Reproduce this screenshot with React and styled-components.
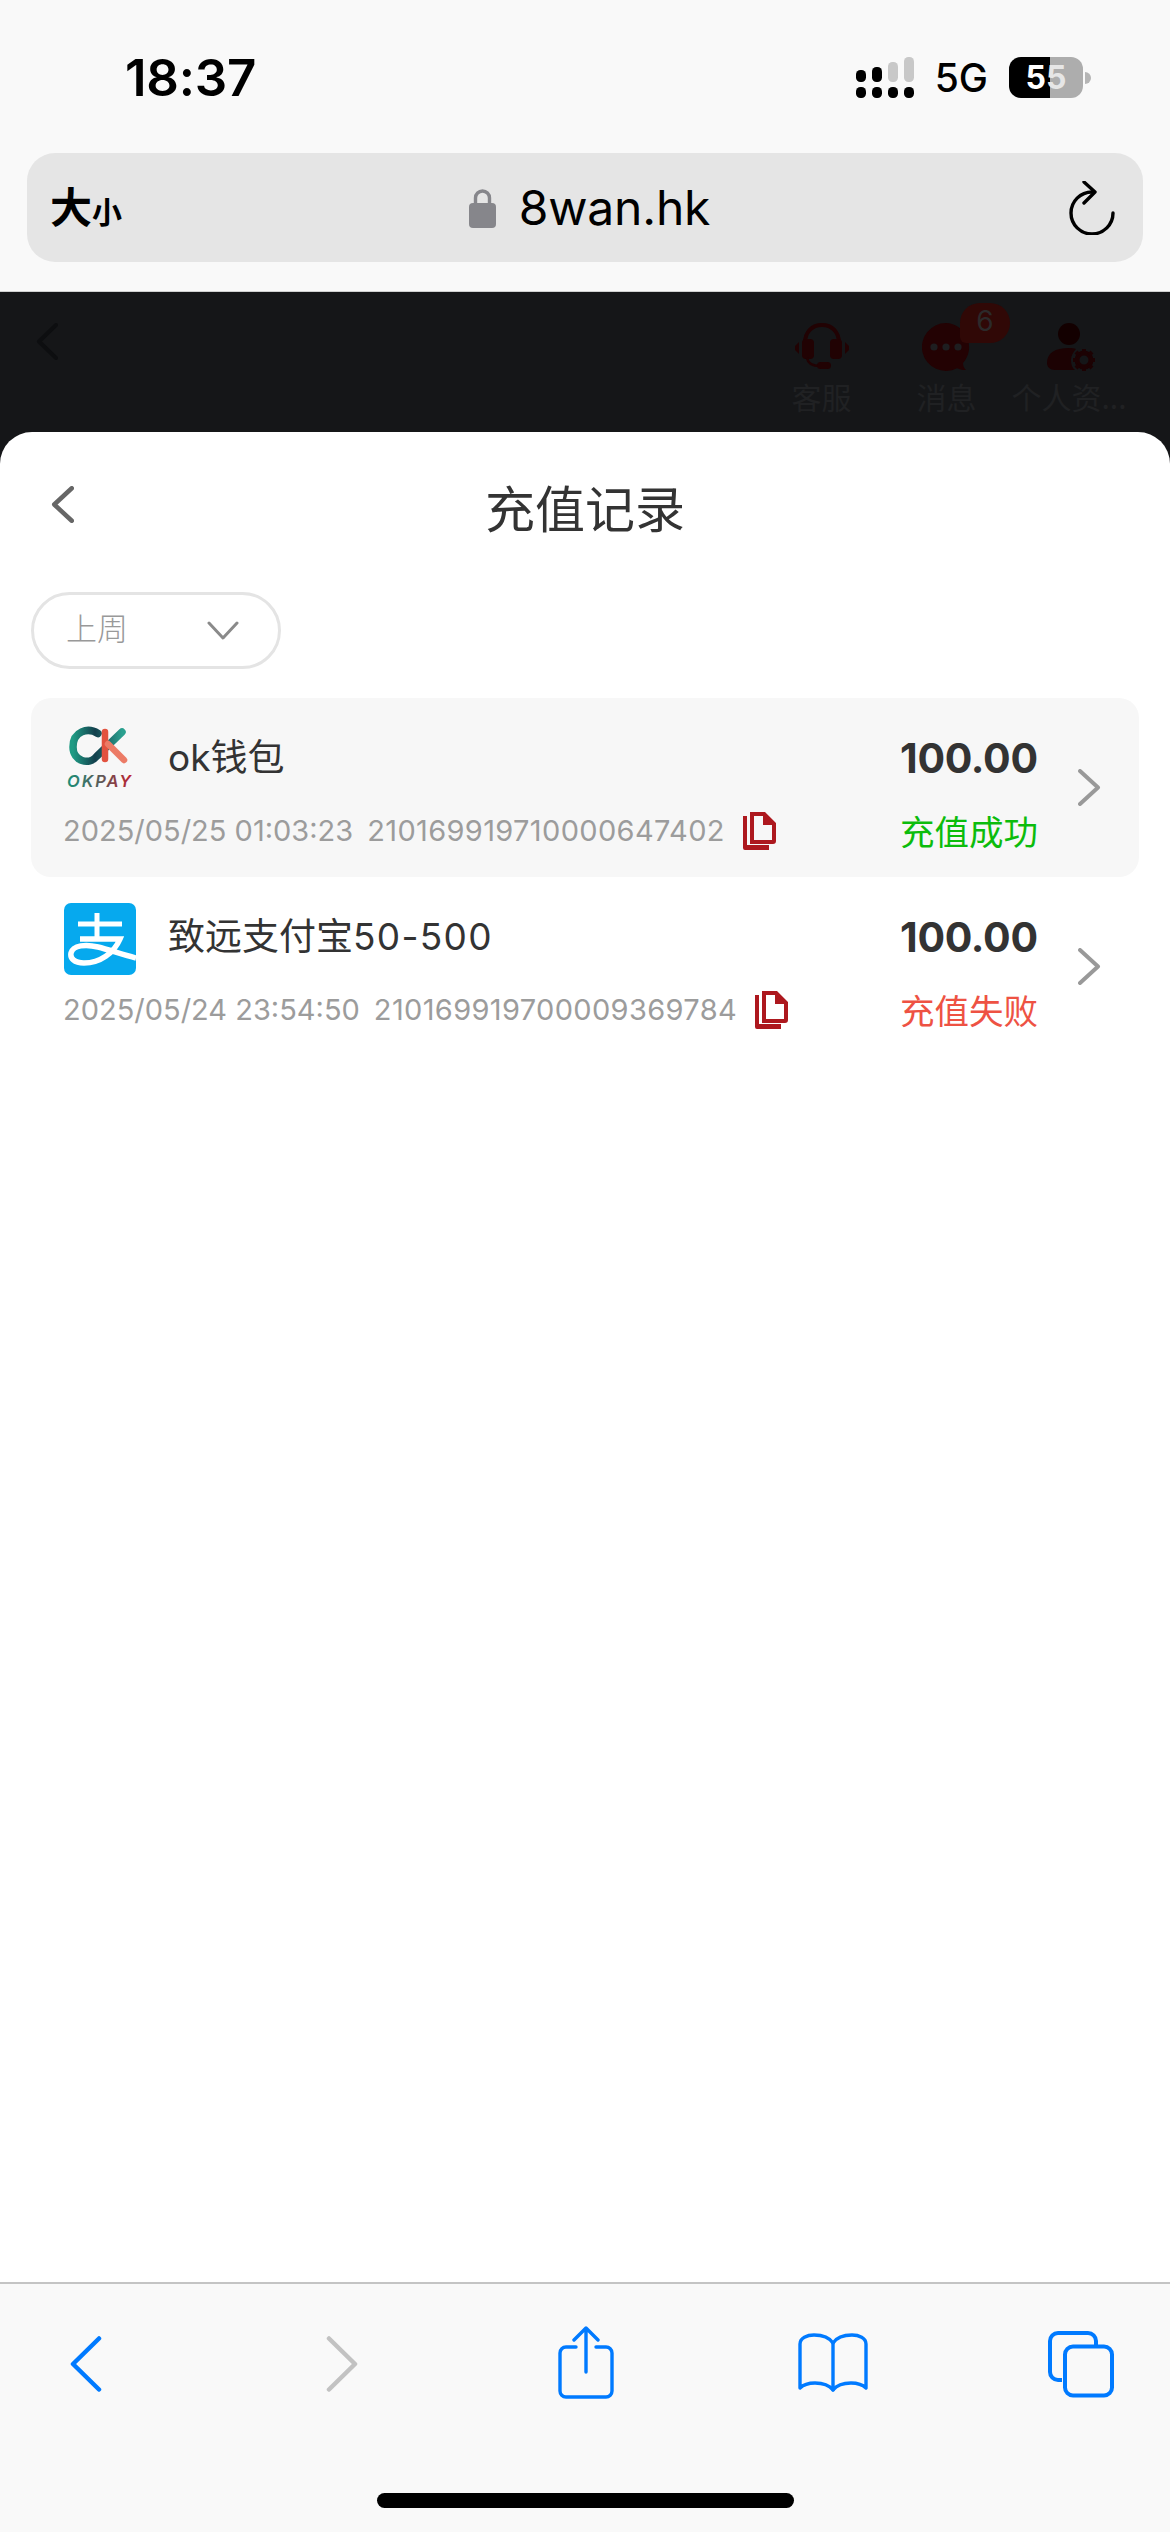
import React from "react";
import styled, { createGlobalStyle } from "styled-components";

const Global = createGlobalStyle`
  html, body { margin: 0; padding: 0; background: #fff; }
  body { font-family: Inter, "Noto Sans CJK SC", sans-serif; }
  * { box-sizing: border-box; }
`;

const Page = styled.div`
  width: 1170px; height: 2532px; display: flex; flex-direction: column; overflow: hidden;
`;
const Chrome = styled.header`
  height: 292px; flex: none; background: #f9f9f9; display: flex; flex-direction: column;
  border-bottom: 1px solid #d0d0d0;
`;
const StatusBar = styled.div`
  height: 153px; flex: none; display: flex; align-items: flex-start; justify-content: space-between;
  padding: 50px 79px 0 125px;
`;
const Time = styled.div`
  font: 600 51px/56px Inter, sans-serif; color: #000; letter-spacing: -0.2px;
`;
const StatusRight = styled.div`
  display: flex; align-items: center; gap: 21px; height: 41px; margin-top: 7px;
`;
const NetLabel = styled.span`
  font: 500 39px/41px Inter, sans-serif; color: #000;
`;
const Battery = styled.div`
  width: 74px; height: 41px; border-radius: 12px; overflow: hidden;
  background: linear-gradient(90deg, #000 0 55%, #adadad 55% 100%);
  color: #fff; font: 700 32px/41px Inter, sans-serif;
  display: flex; justify-content: center;
`;
const BatteryTip = styled.div`
  width: 6px; height: 12px; background: #b5b5b5; border-radius: 0 6px 6px 0; margin-left: -19px;
`;
const FiveLight = styled.span`color: #e6e6e6;`;

const UrlBar = styled.div`
  margin: 0 27px; height: 109px; background: #e5e5e5; border-radius: 28px;
  display: flex; align-items: center; justify-content: space-between; padding: 0 28px 0 23px;
`;
const AaLabel = styled.div`
  display: flex; align-items: baseline; color: #000; font-family: "Noto Sans CJK SC", sans-serif; font-weight: 600;
`;
const AaBig = styled.span`font-size: 42px; line-height: 50px;`;
const AaSmall = styled.span`font-size: 30px; line-height: 50px;`;
const Domain = styled.div`
  display: flex; align-items: center; gap: 23px; margin-left: -12px;
  font: 400 48px/60px Inter, sans-serif; color: #000; letter-spacing: -0.2px;
`;

const Dim = styled.div`
  flex: 1; min-height: 0; background: #151618; display: flex; flex-direction: column;
`;
const DimHeader = styled.div`
  height: 140px; flex: none; display: flex; justify-content: space-between; padding: 31px 41px 0 36px;
`;
const DimActions = styled.div`
  display: flex; align-items: flex-start;
`;
const DimAction = styled.div`
  width: ${p => p.$w}px; display: flex; flex-direction: column; align-items: center; position: relative;
  font: 400 30px/34px "Noto Sans CJK SC", sans-serif; color: #202123; white-space: nowrap; gap: 8px;
`;
const Badge = styled.span`
  position: absolute; left: 76px; top: -20px; width: 50px; height: 40px; border-radius: 20px 20px 20px 6px;
  background: #300806; color: #2c2a2a; font: 400 28px/36px Inter, sans-serif; text-align: center;
`;

const Sheet = styled.section`
  flex: 1; min-height: 0; background: #fff; border-radius: 32px 32px 0 0; display: flex; flex-direction: column;
`;
const SheetTitleBar = styled.div`
  height: 160px; flex: none; display: flex; align-items: center; justify-content: center; position: relative;
  padding-bottom: 13px;
`;
const BackBtn = styled.div`
  position: absolute; left: 51px; top: 54px; display: flex;
`;
const Title = styled.h1`
  margin: 0; font: 400 50px/60px "Noto Sans CJK SC", sans-serif; color: #333;
`;
const Filter = styled.div`
  margin-left: 31px; width: 250px; height: 77px; border: 3px solid #e4e4e4; border-radius: 39px; flex: none;
  display: flex; align-items: center; justify-content: space-between; padding: 0 39px 0 32px;
  font: 300 31px/36px "Noto Sans CJK SC", sans-serif; color: #999;
`;
const FilterLabel = styled.span`margin-top: -8px;`;
const List = styled.div`
  margin: 29px 31px 0; display: flex; flex-direction: column;
`;
const Row = styled.div`
  height: 179px; border-radius: 20px; background: ${p => (p.$active ? "#f7f7f7" : "transparent")};
  display: flex; align-items: stretch; padding: 0 38px 0 33px;
`;
const RowMain = styled.div`
  flex: 1; min-width: 0; display: flex; flex-direction: column; padding-top: 26px;
`;
const RowTop = styled.div`
  display: flex; align-items: center; gap: 32px; height: 72px;
`;
const Logo = styled.div`
  width: 72px; height: 72px; flex: none; display: flex;
`;
const Name = styled.div`
  font: 400 37px/44px Inter, "Noto Sans CJK SC", sans-serif; color: #333;
  margin-top: -4px;
`;
const NameSuffix = styled.span`letter-spacing: 1.3px;`;
const Meta = styled.div`
  display: flex; align-items: center; margin: 15px 0 0 -1px; height: 40px;
  font: 400 29px/40px Inter, sans-serif; color: #9c9c9c; white-space: nowrap;
`;
const MetaId = styled.span`margin-left: 14px; letter-spacing: 0.35px;`;
const CopyIcon = styled.svg`margin-left: 18px; flex: none;`;
const RowSide = styled.div`
  flex: none; width: 136px; display: flex; flex-direction: column; padding-top: 37px; margin-right: 42px;
`;
const Amount = styled.div`
  font: 700 41px/46px Inter, sans-serif; color: #333; letter-spacing: -0.3px; white-space: nowrap; text-align: right;
`;
const Status = styled.div`
  margin-top: 29px; font: 400 34.5px/40px "Noto Sans CJK SC", sans-serif; color: ${p => p.$color}; white-space: nowrap;
`;
const RowChevron = styled.div`
  flex: none; align-self: center; display: flex;
`;
const Spacer = styled.div`flex: 1;`;
const Toolbar = styled.footer`
  height: 250px; flex: none; background: #f9f9f9; border-top: 2px solid #c4c4c4; position: relative;
  display: flex; align-items: flex-start; padding: 42px 0 0 0;
`;
const ToolIcon = styled.svg`
  flex: none; margin-top: ${p => p.$top || 0}px; margin-left: ${p => p.$gap}px;
`;
const HomeBar = styled.div`
  position: absolute; left: 377px; bottom: 24px; width: 417px; height: 15px; border-radius: 8px; background: #000;
`;

function Signal() {
  const cols = [0, 16, 32, 48];
  const upper = [
    { y: 13, h: 12, c: "#000" },
    { y: 10, h: 15, c: "#000" },
    { y: 5, h: 20, c: "#c8c8c8" },
    { y: 0, h: 25, c: "#c8c8c8" },
  ];
  return (
    <svg width="58" height="41" viewBox="0 0 58 41">
      {cols.map((x, i) => (
        <g key={x}>
          <rect x={x} y="30" width="10" height="11" rx="4.5" fill="#000" />
          <rect x={x} y={upper[i].y} width="10" height={upper[i].h} rx="4.5" fill={upper[i].c} />
        </g>
      ))}
    </svg>
  );
}
function Lock() {
  return (
    <svg width="27" height="40" viewBox="0 0 27 40">
      <path d="M6.500 18V10a7 7 0 0 1 14 0v8" fill="none" stroke="#86868b" strokeWidth="3.4" />
      <rect x="0" y="15" width="27" height="25" rx="4" fill="#86868b" />
    </svg>
  );
}
function Reload() {
  return (
    <svg width="46" height="54" viewBox="0 0 46 54" fill="none" stroke="#000" strokeWidth="3.4" strokeLinecap="round" strokeLinejoin="round">
      <path d="M23 11a21 21 0 1 0 21 21" />
      <path d="M15 1l11 10-11 11" />
    </svg>
  );
}
function Chevron({ w, h, color, sw, dir = "left" }) {
  const pts = dir === "left" ? `${w - sw / 2},${sw / 2} ${sw / 2 + 1},${h / 2} ${w - sw / 2},${h - sw / 2}`
    : `${sw / 2},${sw / 2} ${w - sw / 2 - 1},${h / 2} ${sw / 2},${h - sw / 2}`;
  return (
    <svg width={w} height={h} viewBox={`0 0 ${w} ${h}`} fill="none" stroke={color} strokeWidth={sw} strokeLinecap="round" strokeLinejoin="round">
      <polyline points={pts} />
    </svg>
  );
}
function Headset() {
  return (
    <svg width="54" height="48" viewBox="0 0 54 48" fill="#210203">
      <path d="M10 20C10 9 17 2 27 2s17 7 17 18" fill="none" stroke="#210203" strokeWidth="4" />
      <rect x="7" y="16" width="12" height="20" rx="4" />
      <rect x="35" y="16" width="12" height="20" rx="4" />
      <path d="M4 19v12L0 27v-4zM50 19v12l4-4v-4z" />
      <path d="M12 35c1 6 6 8 13 8" fill="none" stroke="#210203" strokeWidth="2.5" />
      <rect x="22" y="39" width="14" height="7" rx="3.5" />
    </svg>
  );
}
function Bubble() {
  return (
    <svg width="50" height="48" viewBox="0 0 50 48">
      <path d="M24 0a24 24 0 1 0 11 45.300c3 1.400 6 1.700 9 1.700-2-2-3-4-3-7A24 24 0 0 0 24 0z" fill="#230203" />
      <circle cx="12" cy="24" r="3.6" fill="#1e1e20" />
      <circle cx="24" cy="24" r="3.6" fill="#1e1e20" />
      <circle cx="36" cy="24" r="3.6" fill="#1e1e20" />
    </svg>
  );
}
function PersonGear() {
  return (
    <svg width="50" height="48" viewBox="0 0 50 48" style={{ marginLeft: 6 }}>
      <circle cx="22" cy="11" r="11" fill="#130000" />
      <path d="M0 40c0-10 8-15 22-15 3 0 5 .2 7 1-3 3-5 7-5 11 0 4 1 8 4 10H8c-5 0-8-3-8-7z" fill="#1c0203" />
      <circle cx="37" cy="37" r="7" fill="none" stroke="#1c0203" strokeWidth="5" />
      <g stroke="#1c0203" strokeWidth="4">
        <path d="M37 26v4M37 44v4M26 37h4M44 37h4M29 29l3 3M42 42l3 3M45 29l-3 3M32 42l-3 3" />
      </g>
    </svg>
  );
}
function OkLogo() {
  return (
    <svg width="72" height="72" viewBox="0 0 72 72">
      <defs>
        <linearGradient id="okc" x1="0" y1="0" x2="1" y2="0">
          <stop offset="0" stopColor="#1f9b84" />
          <stop offset="0.45" stopColor="#123f4c" />
          <stop offset="1" stopColor="#2aa08f" />
        </linearGradient>
        <linearGradient id="oky" x1="0" y1="0" x2="1" y2="0">
          <stop offset="0" stopColor="#1a9077" />
          <stop offset="0.5" stopColor="#5a5a58" />
          <stop offset="1" stopColor="#c2202f" />
        </linearGradient>
      </defs>
      <path d="M34 9.500C24 3 9 7 9 23c0 14 16 19 24 9L58 8" fill="none" stroke="url(#okc)" strokeWidth="7.500" strokeLinecap="round" />
      <path d="M41 8v27" fill="none" stroke="#e2523f" strokeWidth="6.500" strokeLinecap="round" />
      <path d="M44 20l16 16" fill="none" stroke="#ec7b66" strokeWidth="6.500" strokeLinecap="round" />
      <text x="3" y="63" fontFamily="Inter, sans-serif" fontStyle="italic" fontWeight="600" fontSize="16.500" letterSpacing="2" fill="url(#oky)">OKPAY</text>
    </svg>
  );
}
function AlipayLogo() {
  return (
    <svg width="72" height="72" viewBox="0 0 72 72">
      <rect width="72" height="72" rx="7" fill="#06a9ee" />
      <g fill="none" stroke="#fff" strokeLinecap="butt">
        <path d="M14 21h44" strokeWidth="5" />
        <path d="M33 10v26" strokeWidth="5" />
        <path d="M16 36h40c-6 14-20 24-36 24-10 0-14-5-13-10 2-8 15-9 27-6 12 3 25 8 38 11" strokeWidth="5.500" />
      </g>
    </svg>
  );
}
function Copy() {
  return (
    <CopyIcon width="33" height="38" viewBox="0 0 33 38">
      <path d="M0 4h4v29h22v5H2a2 2 0 0 1-2-2z" fill="#ad181e" />
      <path fillRule="evenodd" d="M7 0h15l11 11v18a3 3 0 0 1-3 3H7zm4 4v24h18V13h-9V4z" fill="#ad181e" />
    </CopyIcon>
  );
}

const rows = [
  { logo: <OkLogo />, name: "ok钱包", suffix: "", date: "2025/05/25 01:03:23", id: "210169919710000647402", status: "充值成功", color: "#0cbc0c", active: true },
  { logo: <AlipayLogo />, name: "致远支付宝", suffix: "50-500", date: "2025/05/24 23:54:50", id: "210169919700009369784", status: "充值失败", color: "#ee5243" },
];

export default function App() {
  return (
    <Page>
      <Global />
      <Chrome>
        <StatusBar>
          <Time>18:37</Time>
          <StatusRight>
            <Signal />
            <NetLabel>5G</NetLabel>
            <Battery>5<FiveLight>5</FiveLight></Battery>
            <BatteryTip />
          </StatusRight>
        </StatusBar>
        <UrlBar>
          <AaLabel><AaBig>大</AaBig><AaSmall>小</AaSmall></AaLabel>
          <Domain><Lock />8wan.hk</Domain>
          <Reload />
        </UrlBar>
      </Chrome>
      <Dim>
        <DimHeader>
          <Chevron w={22} h={37} color="#0d0e10" sw={4} />
          <DimActions>
            <DimAction $w={125}><Headset />客服</DimAction>
            <DimAction $w={125}><Bubble /><Badge>6</Badge>消息</DimAction>
            <DimAction $w={120}><PersonGear />个人资...</DimAction>
          </DimActions>
        </DimHeader>
        <Sheet>
          <SheetTitleBar>
            <BackBtn><Chevron w={23} h={37} color="#666" sw={4.5} /></BackBtn>
            <Title>充值记录</Title>
          </SheetTitleBar>
          <Filter>
            <FilterLabel>上周</FilterLabel>
            <svg width="32" height="19" viewBox="0 0 32 19" fill="none" stroke="#8a8a8a" strokeWidth="3" strokeLinecap="round" strokeLinejoin="round"><polyline points="2,2 16,17 30,2" /></svg>
          </Filter>
          <List>
            {rows.map(r => (
              <Row key={r.id} $active={r.active}>
                <RowMain>
                  <RowTop>
                    <Logo>{r.logo}</Logo>
                    <Name>{r.name}<NameSuffix>{r.suffix}</NameSuffix></Name>
                  </RowTop>
                  <Meta>{r.date}<MetaId>{r.id}</MetaId><Copy /></Meta>
                </RowMain>
                <RowSide>
                  <Amount>100.00</Amount>
                  <Status $color={r.color}>{r.status}</Status>
                </RowSide>
                <RowChevron><Chevron w={23} h={37} color="#999" sw={4} dir="right" /></RowChevron>
              </Row>
            ))}
          </List>
          <Spacer />
        </Sheet>
      </Dim>
      <Toolbar>
        <ToolIcon $gap={70} $top={10} width="32" height="56" viewBox="0 0 32 56" fill="none" stroke="#007aff" strokeWidth="4.500" strokeLinecap="round" strokeLinejoin="round"><polyline points="29,2.500 3,28 29,53.500" /></ToolIcon>
        <ToolIcon $gap={224} $top={10} width="32" height="56" viewBox="0 0 32 56" fill="none" stroke="#c2c2c2" strokeWidth="4.500" strokeLinecap="round" strokeLinejoin="round"><polyline points="3,2.500 29,28 3,53.500" /></ToolIcon>
        <ToolIcon $gap={200} width="56" height="73" viewBox="0 0 56 73" fill="none" stroke="#007aff" strokeWidth="3.400" strokeLinecap="round" strokeLinejoin="round">
          <path d="M18 21H8a6 6 0 0 0-6 6v38a6 6 0 0 0 6 6h40a6 6 0 0 0 6-6V27a6 6 0 0 0-6-6H38" />
          <path d="M28 46V3M16 14L28 2l12 12" />
        </ToolIcon>
        <ToolIcon $gap={184} $top={7} width="70" height="60" viewBox="0 0 70 60" fill="none" stroke="#007aff" strokeWidth="3.400" strokeLinecap="round" strokeLinejoin="round">
          <path d="M35 10v47" />
          <path d="M35 10C31 4 24 2 16 2 9 2 2 5 2 11v44c4-4 10-5 15-5 7 0 14 2 18 7 4-5 11-7 18-7 5 0 11 1 15 5V11c0-6-7-9-14-9-8 0-15 2-19 8z" />
        </ToolIcon>
        <ToolIcon $gap={180} $top={5} width="66" height="67" viewBox="0 0 66 67" fill="none" stroke="#007aff" strokeWidth="4" strokeLinejoin="round">
          <path d="M14 49H10a8 8 0 0 1-8-8V10a8 8 0 0 1 8-8h30a8 8 0 0 1 8 8v4" />
          <rect x="17" y="15.500" width="47" height="49" rx="8" />
        </ToolIcon>
        <HomeBar />
      </Toolbar>
    </Page>
  );
}
